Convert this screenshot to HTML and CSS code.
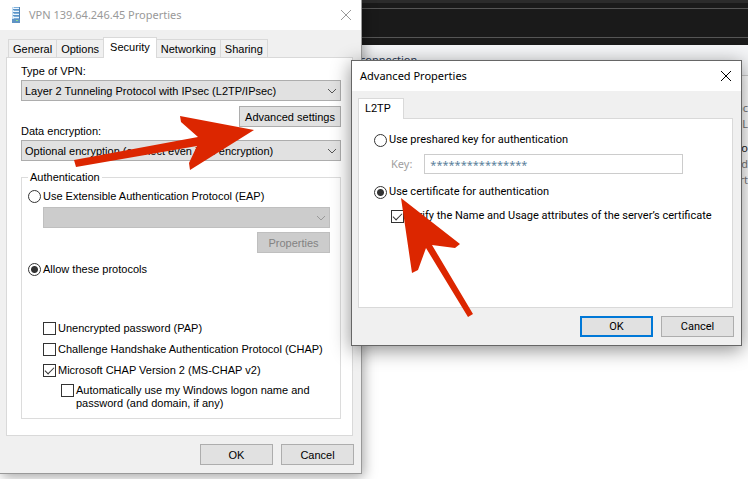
FILE: index.html
```
<!DOCTYPE html>
<html lang="en">
<head>
  <meta charset="UTF-8">
  <meta name="viewport" content="width=device-width, initial-scale=1.0">
  <title>VPN Properties</title>
  <link rel="stylesheet" href="styles.css">
</head>
<body>
  <div class="desktop">
    <div class="app_bar"><div class="app_field"></div></div>
    <div class="app_head">connection</div>
    <div class="app_side">
      <p>oc</p>
      <p>OL</p>
      <p class="dark">tio</p>
      <p>d</p>
      <p>rt</p>
    </div>

    <section class="window vpn">
      <header class="title_bar inactive">
        <svg class="server" width="10" height="16" viewBox="0 0 10 16">
          <rect x="1" y="0" width="8" height="16" fill="#7fb0da"/>
          <rect x="1" y="0" width="2" height="16" fill="#c3dcf1"/>
          <rect x="8" y="0" width="1" height="16" fill="#4d82b5"/>
          <path d="M2 1.5h6M2 4.5h6M2 7.5h6M2 10.5h6" stroke="#eef6fd"/>
          <path d="M2 2.5h6M2 5.5h6M2 8.5h6" stroke="#5b94c8"/>
          <rect x="1" y="12" width="8" height="4" fill="#5f93c4"/>
          <rect x="5" y="13" width="2" height="1" fill="#8fe08a"/>
        </svg>
        <h1>VPN 139.64.246.45 Properties</h1>
        <button class="close" aria-label="Close"><svg width="12" height="12" viewBox="0 0 12 12"><path d="M1 1l10 10M11 1L1 11"/></svg></button>
      </header>
      <div class="window_bd">
        <nav class="tabs">
          <button class="tab">General</button>
          <button class="tab">Options</button>
          <button class="tab active">Security</button>
          <button class="tab">Networking</button>
          <button class="tab">Sharing</button>
        </nav>
        <div class="panel">
          <label for="vpnType">Type of VPN:</label>
          <div class="drop">
            <select id="vpnType"><option>Layer 2 Tunneling Protocol with IPsec (L2TP/IPsec)</option></select>
            <svg width="10" height="6" viewBox="0 0 10 6"><path d="M1 1l4 4 4-4"/></svg>
          </div>
          <button class="btn advanced">Advanced settings</button>
          <label for="encryption">Data encryption:</label>
          <div class="drop">
            <select id="encryption"><option>Optional encryption (connect even if no encryption)</option></select>
            <svg width="10" height="6" viewBox="0 0 10 6"><path d="M1 1l4 4 4-4"/></svg>
          </div>
          <fieldset class="auth">
            <legend>Authentication</legend>
            <label class="choice"><input type="radio" name="auth">Use Extensible Authentication Protocol (EAP)</label>
            <div class="eap">
              <div class="drop">
                <select aria-label="EAP type" disabled></select>
                <svg width="10" height="6" viewBox="0 0 10 6"><path d="M1 1l4 4 4-4"/></svg>
              </div>
              <button class="btn" disabled>Properties</button>
            </div>
            <label class="choice"><input type="radio" name="auth" checked>Allow these protocols</label>
            <div class="protocols">
              <label class="choice"><input type="checkbox">Unencrypted password (PAP)</label>
              <label class="choice"><input type="checkbox">Challenge Handshake Authentication Protocol (CHAP)</label>
              <label class="choice"><input type="checkbox" checked>Microsoft CHAP Version 2 (MS-CHAP v2)</label>
              <label class="choice sub"><input type="checkbox"><span>Automatically use my Windows logon name and<br>password (and domain, if any)</span></label>
            </div>
          </fieldset>
        </div>
        <footer class="actions">
          <button class="btn">OK</button>
          <button class="btn">Cancel</button>
        </footer>
      </div>
    </section>

    <section class="window advanced_props">
      <header class="title_bar">
        <h2>Advanced Properties</h2>
        <button class="close" aria-label="Close"><svg width="12" height="12" viewBox="0 0 12 12"><path d="M1 1l10 10M11 1L1 11"/></svg></button>
      </header>
      <div class="window_bd">
        <nav class="tabs">
          <button class="tab active">L2TP</button>
        </nav>
        <div class="panel">
          <label class="choice"><input type="radio" name="l2tp">Use preshared key for authentication</label>
          <div class="key_row">
            <label for="key">Key:</label>
            <input type="text" id="key" value="****************" disabled>
          </div>
          <label class="choice"><input type="radio" name="l2tp" checked>Use certificate for authentication</label>
          <label class="choice verify"><input type="checkbox" checked>Verify the Name and Usage attributes of the server’s certificate</label>
        </div>
        <footer class="actions">
          <button class="btn default">OK</button>
          <button class="btn">Cancel</button>
        </footer>
      </div>
    </section>

    <svg class="arrows" width="748" height="479" viewBox="0 0 748 479">
      <path d="M254 130L180 116L181 122L198 137L74 160L76 167L197 146L189 163L190 170Z"/>
      <path d="M401 198L412 273L418 270L426 248L468 317L473 314L432 245L455 248L460 244Z"/>
    </svg>
  </div>
</body>
</html>
```

FILE: styles.css
```
* {
  box-sizing: border-box;
}
body {
  margin: 0;
  background-color: #fff;
  font: 11px/14px "Liberation Sans", Arial, sans-serif;
  color: #000;
}
button, select, input {
  margin: 0;
  font: inherit;
  color: inherit;
}
h1, h2, p {
  margin: 0;
  font-size: 11px;
  font-weight: normal;
}
.desktop {
  position: relative;
  min-height: 100vh;
  overflow: hidden;
}

/* application behind the dialogs */
.app_bar {
  height: 45px;
  padding: 5px 0 7px;
  border-top: 3px solid #2b2b2b;
  background-color: #1a1a1a;
}
.app_field {
  height: 30px;
  border-top: 1px solid #555;
  border-bottom: 1px solid #555;
}
.app_head {
  height: 31px;
  padding: 8px 0 0 360px;
  border-bottom: 1px solid #ccc;
  background-color: #f4f5f7;
  color: #2b3a55;
  font-family: "Noto Sans", sans-serif;
}
.app_side {
  padding-top: 24px;
  font: 11px/16px "Noto Sans", sans-serif;
  text-align: right;
  color: #777;
}
.app_side .dark {
  margin-top: 8px;
  color: #222;
}

.window {
  position: absolute;
  background-color: #f0f0f0;
}
.vpn {
  top: 0;
  left: 0;
  width: 362px;
  border-right: 1px solid #999;
  border-bottom: 1px solid #999;
  box-shadow: 2px 3px 12px rgba(0, 0, 0, 0.35);
}
.advanced_props {
  top: 60px;
  left: 351px;
  width: 391px;
  border: 1px solid #666;
  box-shadow: 0 4px 18px rgba(0, 0, 0, 0.45);
  font-family: Roboto, sans-serif;
}
.title_bar {
  display: flex;
  align-items: center;
  height: 30px;
  padding: 0 9px 0 8px;
  background-color: #fff;
  font-family: "Noto Sans", sans-serif;
}
.title_bar.inactive {
  padding-left: 11px;
  color: #999;
}
.server {
  margin-right: 8px;
}
.close {
  display: flex;
  margin-left: auto;
  padding: 0;
  border: 0;
  background: none;
}
.close path {
  fill: none;
  stroke: currentColor;
}

.tabs {
  display: flex;
  align-items: flex-end;
  padding: 7px 0 0 2px;
}
.tab {
  height: 18px;
  margin-right: -1px;
  padding: 0 4px;
  border: 1px solid #d9d9d9;
  border-bottom: 0;
  background-color: #f0f0f0;
}
.tab.active {
  position: relative;
  height: 21px;
  margin-bottom: -1px;
  padding: 0 6px 2px;
  background-color: #fff;
}
.window_bd {
  padding: 0 7px 8px 6px;
}
.panel {
  display: flex;
  flex-direction: column;
  border: 1px solid #d9d9d9;
  background-color: #fff;
}
.vpn .panel {
  height: 379px;
  margin-right: 1px;
  padding: 6px 11px 16px 14px;
}
.advanced_props .tabs {
  padding-left: 0;
}
.advanced_props .tab {
  width: 46px;
  padding: 0 6px;
  text-align: left;
}
.advanced_props .panel {
  height: 190px;
  margin-right: 1px;
  padding: 14px 15px;
}

.btn {
  width: 73px;
  height: 21px;
  padding: 0;
  border: 1px solid #adadad;
  background-color: #e1e1e1;
}
.btn:disabled {
  border-color: #bfbfbf;
  background-color: #ccc;
  color: #838383;
}
.btn.default {
  border: 2px solid #0078d7;
}
.btn.advanced {
  align-self: flex-end;
  width: 102px;
  margin: 5px 0 -3px;
}
.drop {
  position: relative;
  margin-top: 2px;
}
.drop select {
  display: block;
  width: 100%;
  height: 21px;
  padding: 0 3px;
  border: 1px solid #adadad;
  border-radius: 0;
  appearance: none;
  background-color: #e1e1e1;
}
.drop select:disabled {
  border-color: #bfbfbf;
  background-color: #ccc;
  opacity: 1;
}
.drop svg {
  position: absolute;
  top: 8px;
  right: 4px;
  fill: none;
  stroke: #555;
}
.drop select:disabled + svg {
  stroke: #999;
}

.auth {
  min-width: 0;
  height: 249px;
  margin: 9px 0 0;
  padding: 5px 10px 0 6px;
  border: 1px solid #dcdcdc;
}
.auth legend {
  padding: 0 2px;
}
.choice {
  display: flex;
  align-items: center;
  gap: 2px;
}
.choice input {
  flex: none;
  width: 13px;
  height: 13px;
  border: 1px solid #333;
  appearance: none;
  background-color: #fff;
}
.choice input[type="radio"] {
  border-radius: 50%;
}
.choice input[type="radio"]:checked {
  background-image: radial-gradient(circle, #333 3px, transparent 4px);
}
.choice input[type="checkbox"]:checked::before {
  content: "";
  display: block;
  width: 8px;
  height: 4px;
  margin: 2px 0 0 1px;
  border: solid #333;
  border-width: 0 0 1px 1px;
  transform: rotate(-45deg);
}
.eap {
  display: flex;
  flex-direction: column;
  gap: 4px;
  align-items: flex-end;
  padding: 2px 0 9px 15px;
}
.eap .drop {
  width: 100%;
}
.protocols {
  display: grid;
  gap: 7px;
  padding: 45px 0 0 15px;
}
.protocols .sub {
  align-items: flex-start;
  padding-left: 18px;
}
.protocols .sub span {
  line-height: 13px;
}

.key_row {
  display: flex;
  align-items: center;
  margin: 7px 34px 11px 17px;
  color: #a0a0a0;
  font-family: "Noto Sans", sans-serif;
}
.key_row input {
  flex: 1;
  height: 20px;
  margin-left: 12px;
  padding: 0 5px;
  border: 1px solid #ccc;
  background-color: #fff;
  color: #5b7f9b;
}
.verify {
  margin: 10px 0 0 17px;
}
.actions {
  display: flex;
  justify-content: flex-end;
  gap: 8px;
  padding-top: 8px;
}

.arrows {
  position: absolute;
  top: 0;
  left: 0;
  fill: #dc2600;
  pointer-events: none;
}
```
